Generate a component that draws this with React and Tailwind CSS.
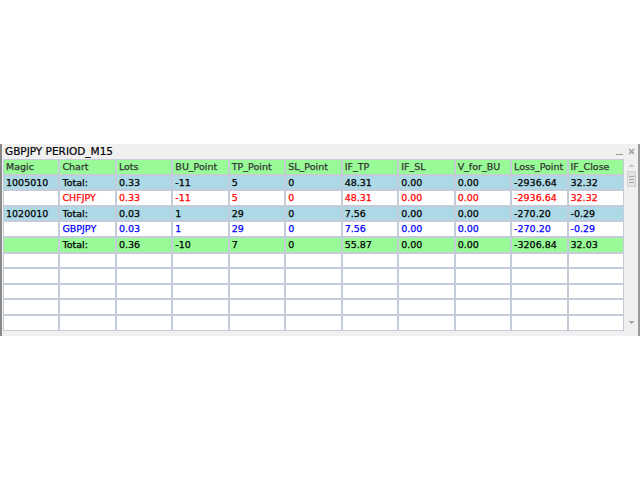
import React from 'react';

const cols = ['Magic', 'Chart', 'Lots', 'BU_Point', 'TP_Point', 'SL_Point', 'IF_TP', 'IF_SL', 'V_for_BU', 'Loss_Point', 'IF_Close'];

const rows = [
  { bg: 'bg-[#add8e6]', color: 'text-black', cells: ['1005010', 'Total:', '0.33', '-11', '5', '0', '48.31', '0.00', '0.00', '-2936.64', '32.32'] },
  { bg: 'bg-white', color: 'text-[#ff0000]', cells: ['', 'CHFJPY', '0.33', '-11', '5', '0', '48.31', '0.00', '0.00', '-2936.64', '32.32'] },
  { bg: 'bg-[#add8e6]', color: 'text-black', cells: ['1020010', 'Total:', '0.03', '1', '29', '0', '7.56', '0.00', '0.00', '-270.20', '-0.29'] },
  { bg: 'bg-white', color: 'text-[#0000ff]', cells: ['', 'GBPJPY', '0.03', '1', '29', '0', '7.56', '0.00', '0.00', '-270.20', '-0.29'] },
  { bg: 'bg-[#98fb98]', color: 'text-black', cells: ['', 'Total:', '0.36', '-10', '7', '0', '55.87', '0.00', '0.00', '-3206.84', '32.03'] },
];

const empty = Array.from({ length: 5 }, () => ({ bg: 'bg-white', color: 'text-black', cells: Array(11).fill('') }));

function Cell({ text, bg, color }) {
  return (
    <div className={`${bg} ${color} h-[13.6px] pl-[2px] flex items-center leading-none whitespace-nowrap overflow-hidden [-webkit-text-stroke:0.25px]`}>
      {text}
    </div>
  );
}

function Scrollbar() {
  return (
    <div className="w-[14px] flex flex-col items-center pt-[3px] pb-[3px]">
      <svg width="7" height="5" viewBox="0 0 7 5" className="mt-[1px]">
        <path d="M0.5 4 L3.5 1 L6.5 4 Z" fill="#c4c4c4" />
      </svg>
      <div className="mt-[3px] w-[9px] h-[16px] bg-[#e4e4e4] border border-[#d0d0d0] flex flex-col items-center justify-center gap-[2px]">
        <div className="w-[5px] h-[1px] bg-[#a8a8a8]" />
        <div className="w-[5px] h-[1px] bg-[#a8a8a8]" />
        <div className="w-[5px] h-[1px] bg-[#a8a8a8]" />
      </div>
      <div className="flex-1" />
      <svg width="7" height="5" viewBox="0 0 7 5" className="mb-[3px]">
        <path d="M0.5 1 L3.5 4 L6.5 1 Z" fill="#a0a0a0" />
      </svg>
    </div>
  );
}

export default function App() {
  const all = [...rows, ...empty];
  return (
    <div className="w-[640px] h-[480px] bg-white" style={{ fontFamily: '"DejaVu Sans", Verdana, sans-serif' }}>
      <div className="h-[144px]" />
      <div className="w-[640px] h-[192px] bg-[#f0f0f0] border-l-2 border-l-[#8a8a8a] border-r-2 border-r-[#9a9a9a] flex flex-col">
        <div className="h-[15px] flex items-center justify-between pl-[3px] pr-[3px]">
          <span className="text-[10.5px] text-black leading-none [-webkit-text-stroke:0.2px]">GBPJPY PERIOD_M15</span>
          <div className="flex items-center gap-[5px]">
            <div className="w-[7px] h-[1px] bg-[#9a9a9a] mt-[5px]" />
            <svg width="7" height="7" viewBox="0 0 7 7">
              <path d="M1 1 L6 6 M6 1 L1 6" stroke="#9a9a9a" strokeWidth="1.3" />
            </svg>
          </div>
        </div>
        <div className="flex">
          <div className="ml-[1px] w-[621px] bg-[#c3ccd8] p-[1px] grid grid-cols-11 gap-[2px] text-[9.5px]">
            {cols.map((c) => (
              <Cell key={c} text={c} bg="bg-[#98fb98]" color="text-[#333]" />
            ))}
            {all.map((r, i) =>
              r.cells.map((t, j) => <Cell key={`${i}-${j}`} text={t} bg={r.bg} color={r.color} />)
            )}
          </div>
          <Scrollbar />
        </div>
      </div>
    </div>
  );
}
